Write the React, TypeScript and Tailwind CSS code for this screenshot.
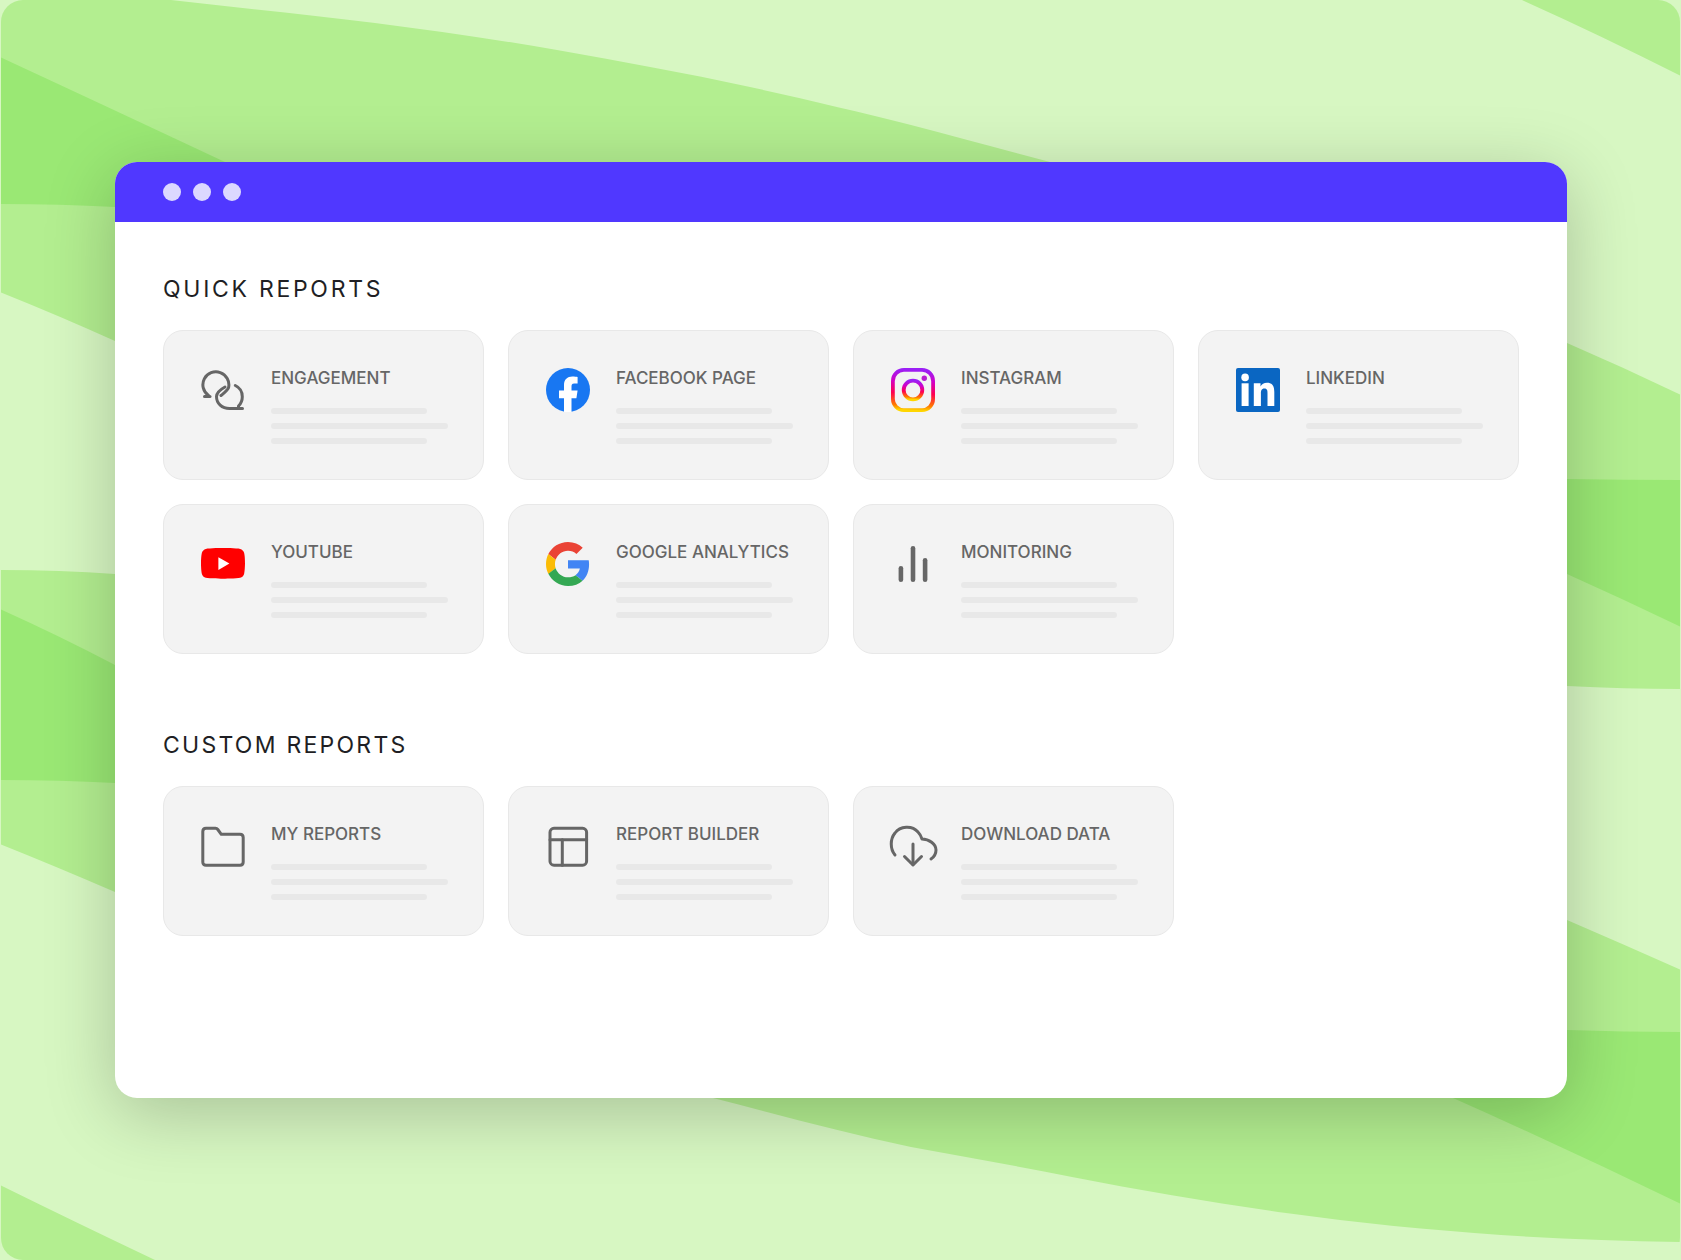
import type { ReactNode } from "react"

const stroke = {
  fill: "none",
  stroke: "#666666",
  strokeWidth: 3,
  strokeLinecap: "round" as const,
  strokeLinejoin: "round" as const,
}

function EngagementIcon() {
  return (
    <svg viewBox="0 0 44 44" className="w-11 h-11">
      <g {...stroke}>
        <path d="M7.5 27.5A13 13 0 1 1 27.6 19.5C26.6 22.5 23 25 20 27.5" />
        <path d="M3.5 28.5H9" />
        <path d="M34.3 17.5C38.5 19.5 41.3 24 41.3 28.7C41.3 32.5 40 35.5 37.5 38V40.5" />
        <path d="M41.5 40.5H28.5C21 40.5 15.5 35.5 15.5 28.5C15.5 24.5 19.5 21.5 24 19" />
      </g>
    </svg>
  )
}

function FacebookIcon() {
  return (
    <svg viewBox="0 0 44 44" className="w-11 h-11">
      <circle cx="22" cy="22" r="22" fill="#1877f2" />
      <path
        fill="#ffffff"
        d="M18 44V30.3H13V22.6H18V17C18 11.5 21.5 8.6 26.3 8.6C28.5 8.6 30.5 8.9 31.6 9.1V15.5H28.2C25.7 15.5 25.5 17 25.5 19V22.6H31.6L30.4 30.3H25.5V44Z"
      />
    </svg>
  )
}

function InstagramIcon() {
  return (
    <svg viewBox="0 0 44 44" className="w-11 h-11">
      <defs>
        <linearGradient id="ig" x1="0.4" y1="1" x2="0.45" y2="0">
          <stop offset="0" stopColor="#ffd600" />
          <stop offset="0.12" stopColor="#ff7a00" />
          <stop offset="0.42" stopColor="#ff0050" />
          <stop offset="0.72" stopColor="#d300c5" />
          <stop offset="1" stopColor="#9b1ff5" />
        </linearGradient>
      </defs>
      <rect x="1.9" y="1.9" width="40.2" height="40.2" rx="11" fill="none" stroke="url(#ig)" strokeWidth="3.8" />
      <circle cx="22" cy="22" r="9.3" fill="none" stroke="url(#ig)" strokeWidth="3.8" />
      <circle cx="33.3" cy="10.2" r="2.7" fill="#b81fd0" />
    </svg>
  )
}

function LinkedinIcon() {
  return (
    <svg viewBox="0 0 44 44" className="w-11 h-11">
      <rect width="44" height="44" rx="2" fill="#0a66c2" />
      <circle cx="9.1" cy="9.4" r="3.8" fill="#ffffff" />
      <rect x="5.6" y="15.3" width="7" height="22.7" fill="#ffffff" />
      <path
        fill="#ffffff"
        d="M17.8 15.3H24.5V18.4C25.5 16.5 28 14.8 31 14.8C37 14.8 38.3 19 38.3 24V38H31.5V25.6C31.5 23 31.4 20.5 28.4 20.5C25.4 20.5 24.9 23 24.9 25.5V38H17.8Z"
      />
    </svg>
  )
}

function YoutubeIcon() {
  return (
    <svg viewBox="0 0 44 44" className="w-11 h-11">
      <path
        fill="#ff0000"
        d="M43.1 10.8C42.6 8.9 41.1 7.4 39.2 6.9C35.8 6 22 6 22 6S8.2 6 4.8 6.9C2.9 7.4 1.4 8.9 0.9 10.8C0 14.2 0 21.3 0 21.3S0 28.5 0.9 31.9C1.4 33.8 2.9 35.3 4.8 35.8C8.2 36.7 22 36.7 22 36.7S35.8 36.7 39.2 35.8C41.1 35.3 42.6 33.8 43.1 31.9C44 28.5 44 21.3 44 21.3S44 14.2 43.1 10.8Z"
      />
      <path fill="#ffffff" d="M17.4 15.2V27.9L28.4 21.5Z" />
    </svg>
  )
}

function GoogleIcon() {
  return (
    <svg viewBox="0 0 48 48" className="w-11 h-11">
      <path fill="#EA4335" d="M24 9.5c3.54 0 6.71 1.22 9.21 3.6l6.85-6.85C35.9 2.38 30.47 0 24 0 14.62 0 6.51 5.38 2.56 13.22l7.98 6.19C12.43 13.72 17.74 9.5 24 9.5z" />
      <path fill="#4285F4" d="M46.98 24.55c0-1.57-.15-3.09-.38-4.55H24v9.02h12.94c-.58 2.96-2.26 5.48-4.78 7.18l7.73 6c4.51-4.18 7.09-10.36 7.09-17.65z" />
      <path fill="#FBBC05" d="M10.53 28.59c-.48-1.45-.76-2.99-.76-4.59s.27-3.14.76-4.59l-7.98-6.19C.92 16.46 0 20.12 0 24c0 3.88.92 7.54 2.56 10.78l7.97-6.19z" />
      <path fill="#34A853" d="M24 48c6.48 0 11.93-2.13 15.89-5.81l-7.73-6c-2.15 1.45-4.92 2.3-8.16 2.3-6.26 0-11.57-4.22-13.47-9.91l-7.98 6.19C6.51 42.62 14.62 48 24 48z" />
    </svg>
  )
}

function MonitoringIcon() {
  return (
    <svg viewBox="0 0 44 44" className="w-11 h-11">
      <g fill="#666666">
        <rect x="7.6" y="24" width="4.6" height="16" rx="2.3" />
        <rect x="19.7" y="4" width="4.6" height="36" rx="2.3" />
        <rect x="31.8" y="16" width="4.6" height="24" rx="2.3" />
      </g>
    </svg>
  )
}

function FolderIcon() {
  return (
    <svg viewBox="0 0 44 44" className="w-11 h-11">
      <path
        {...stroke}
        d="M1.8 7.5C1.8 5.5 3 4.3 5 4.3H14.5C15.5 4.3 16.2 4.7 16.8 5.5L20.3 10.3H39C41 10.3 42.2 11.5 42.2 13.5V38C42.2 40 41 41.2 39 41.2H5C3 41.2 1.8 40 1.8 38Z"
      />
    </svg>
  )
}

function BuilderIcon() {
  return (
    <svg viewBox="0 0 44 44" className="w-11 h-11">
      <g {...stroke}>
        <rect x="4" y="4.3" width="36.6" height="36.9" rx="4" />
        <path d="M4 15.8H40.6" />
        <path d="M16.3 15.8V41.2" />
      </g>
    </svg>
  )
}

function DownloadIcon() {
  return (
    <svg viewBox="0 0 44 44" className="w-11 h-11 overflow-visible">
      <g {...stroke}>
        <path d="M4 31C-1 25 -1 15 4 9C9 2 21 1 27 8C29 10 30 12 31 15C38 15 45 20 45 26C45 29 43 33 40 35" />
        <path d="M22 20V40" />
        <path d="M13.5 32.5L22 41L30.5 32.5" />
      </g>
    </svg>
  )
}

function ReportCard({ icon, title }: { icon: ReactNode; title: string }) {
  return (
    <div className="h-[150px] flex items-start gap-[26px] pl-[37px] pr-[35px] pt-[35px] bg-[#f3f3f3] border-[1.5px] border-[#e8e8e8] rounded-[20px]">
      <div className="w-11 h-11 mt-[2px] shrink-0">{icon}</div>
      <div className="flex-1">
        <p className="text-[17px] leading-6 font-medium text-[#666666] whitespace-nowrap">{title}</p>
        <div className="mt-[18px] flex flex-col gap-[9px]">
          <div className="h-[6px] w-[156px] rounded-full bg-[#e8e8e8]" />
          <div className="h-[6px] w-[177px] rounded-full bg-[#e8e8e8]" />
          <div className="h-[6px] w-[156px] rounded-full bg-[#e8e8e8]" />
        </div>
      </div>
    </div>
  )
}

function Waves() {
  return (
    <svg viewBox="0 0 1681 1260" className="absolute inset-0 w-full h-full">
      <defs>
        <clipPath id="page">
          <rect x="1" y="0" width="1679" height="1260" rx="22" />
        </clipPath>
      </defs>
      <g clipPath="url(#page)">
        <g fill="#b3ee90">
          <path d="M0 0H171C240 8 310 15 375 23C435 31 495 39 557 50C620 61 685 73 750 87C805 99 860 112 911 125C960 138 1005 150 1050 162L1100 400H115V341Q60 316 0 292Z" />
          <path d="M0 570Q60 570 115 574V892Q60 868 0 844Z" />
          <path d="M1522 0Q1600 35 1681 76V0Z" />
          <path d="M1567 343Q1625 368 1681 395V689Q1625 689 1567 686Z" />
          <path d="M1567 920Q1625 945 1681 970V1242C1620 1241 1560 1239 1501 1235C1430 1230 1358 1223 1286 1213C1215 1203 1143 1191 1072 1177C1018 1166 965 1157 911 1147C845 1133 779 1115 713 1098L700 1000H1567Z" />
          <path d="M0 1185Q75 1222 155 1260H0Z" />
        </g>
        <g fill="#9ae874">
          <path d="M0 57Q110 108 225 162V300H115V207Q60 204 0 204Z" />
          <path d="M0 609Q60 636 115 665V783Q60 780 0 780Z" />
          <path d="M1567 479Q1625 480 1681 480V627Q1625 600 1567 574Z" />
          <path d="M1567 1030Q1625 1032 1681 1032V1204Q1570 1150 1453 1098V1000H1567Z" />
        </g>
      </g>
    </svg>
  )
}

export default function App() {
  return (
    <div className="relative w-[1681px] h-[1260px] overflow-hidden bg-[#d7f7c2] font-['Inter',sans-serif] pt-[162px] pl-[115px]">
      <Waves />
      <div className="relative w-[1452px] h-[936px] bg-white rounded-[22px] overflow-hidden shadow-[0_15px_70px_rgba(0,0,0,0.22)]">
        <div className="h-[60px] bg-[#5038ff] flex items-center gap-3 pl-12">
          <span className="w-[18px] h-[18px] rounded-full bg-[#dcd8ff]" />
          <span className="w-[18px] h-[18px] rounded-full bg-[#dcd8ff]" />
          <span className="w-[18px] h-[18px] rounded-full bg-[#dcd8ff]" />
        </div>
        <div className="px-12 pt-[51px]">
          <h2 className="text-[23px] leading-8 font-normal tracking-[0.118em] text-[#1f1f24]">QUICK REPORTS</h2>
          <div className="mt-[25px] grid grid-cols-4 gap-6">
            <ReportCard icon={<EngagementIcon />} title="ENGAGEMENT" />
            <ReportCard icon={<FacebookIcon />} title="FACEBOOK PAGE" />
            <ReportCard icon={<InstagramIcon />} title="INSTAGRAM" />
            <ReportCard icon={<LinkedinIcon />} title="LINKEDIN" />
            <ReportCard icon={<YoutubeIcon />} title="YOUTUBE" />
            <ReportCard icon={<GoogleIcon />} title="GOOGLE ANALYTICS" />
            <ReportCard icon={<MonitoringIcon />} title="MONITORING" />
          </div>
          <h2 className="mt-[75px] text-[23px] leading-8 font-normal tracking-[0.098em] text-[#1f1f24]">CUSTOM REPORTS</h2>
          <div className="mt-[25px] grid grid-cols-4 gap-6">
            <ReportCard icon={<FolderIcon />} title="MY REPORTS" />
            <ReportCard icon={<BuilderIcon />} title="REPORT BUILDER" />
            <ReportCard icon={<DownloadIcon />} title="DOWNLOAD DATA" />
          </div>
        </div>
      </div>
    </div>
  )
}
